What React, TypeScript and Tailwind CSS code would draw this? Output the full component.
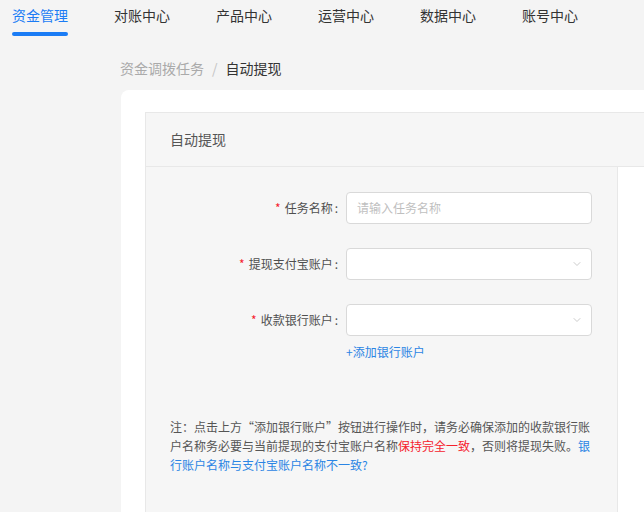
import { ChevronDown } from "lucide-react";

const tabs = ["资金管理", "对账中心", "产品中心", "运营中心", "数据中心", "账号中心"];

function FormLabel({ text }: { text: string }) {
  return (
    <div className="w-[176px] shrink-0 flex items-center justify-end text-[12px] text-[#4f4f4f]">
      <span className="text-[#f5222d] mr-1 text-[12px]">*</span>
      <span>{text}</span>
      <span className="ml-0.5 mr-2">:</span>
    </div>
  );
}

function SelectBox() {
  return (
    <div className="w-[246px] h-8 bg-white border border-[#d9d9d9] rounded flex items-center justify-end pr-[8px]">
      <ChevronDown className="w-3 h-3 text-[#c4c4c4]" strokeWidth={1.75} />
    </div>
  );
}

export default function App() {
  return (
    <div
      lang="zh-CN"
      className="w-full h-[512px] overflow-hidden bg-[#f4f4f4]"
      style={{ fontFamily: '"Noto Sans CJK SC", "Noto Sans", sans-serif' }}
    >
      {/* Top tabs */}
      <div className="flex gap-[46px] pl-3">
        {tabs.map((t, i) => (
          <div key={t} className="flex flex-col pt-1">
            <span
              className={`text-[14px] leading-[22px] whitespace-nowrap ${
                i === 0 ? "text-[#1a7cf5]" : "text-[#333]"
              }`}
            >
              {t}
            </span>
            <div
              className={`mt-[6px] h-1 rounded-full ${i === 0 ? "bg-[#1a7cf5]" : "bg-transparent"}`}
            />
          </div>
        ))}
      </div>

      {/* Breadcrumb */}
      <div className="mt-[21px] pl-[120px] flex items-center text-[14px] leading-[22px]">
        <span className="text-[#aaa]">资金调拨任务</span>
        <span className="mx-2 text-[#c4c4c4]">/</span>
        <span className="text-[#333]">自动提现</span>
      </div>

      {/* Card */}
      <div className="mt-[11px] ml-[121px] w-[620px] h-[500px] bg-white rounded-tl-lg pt-[22px] pl-6">
        <div className="w-[600px] h-[480px] border-t border-l border-[#e8e8e8] bg-[#f6f6f6] flex flex-col">
          <div className="h-[54px] shrink-0 px-6 flex items-center border-b border-[#e8e8e8] text-[14px] text-[#555]">
            自动提现
          </div>
          <div className="flex flex-1">
            <div className="w-[472px] shrink-0 border-r border-[#e8e8e8] px-6 pt-[25px]">
              {/* 任务名称 */}
              <div className="flex mb-6">
                <FormLabel text="任务名称" />
                <div className="w-[246px] h-8 bg-white border border-[#d9d9d9] rounded flex items-center px-[10px] text-[12px] text-[#bfbfbf]">
                  请输入任务名称
                </div>
              </div>
              {/* 提现支付宝账户 */}
              <div className="flex mb-6">
                <FormLabel text="提现支付宝账户" />
                <SelectBox />
              </div>
              {/* 收款银行账户 */}
              <div className="flex">
                <FormLabel text="收款银行账户" />
                <SelectBox />
              </div>
              <div className="mt-[7px] ml-[176px] text-[12px] leading-[18px] text-[#2b85e4]">
                +添加银行账户
              </div>

              <p className="mt-[57px] text-[12px] leading-[1.5715] text-[#555]">
                注：点击上方“添加银行账户”按钮进行操作时，请务必确保添加的收款银行账户名称务必要与当前提现的支付宝账户名称
                <span className="text-[#f5222d]">保持完全一致</span>
                ，否则将提现失败。
                <span className="text-[#2b85e4]">银行账户名称与支付宝账户名称不一致?</span>
              </p>
            </div>
            <div className="flex-1 bg-white" />
          </div>
        </div>
      </div>
    </div>
  );
}
